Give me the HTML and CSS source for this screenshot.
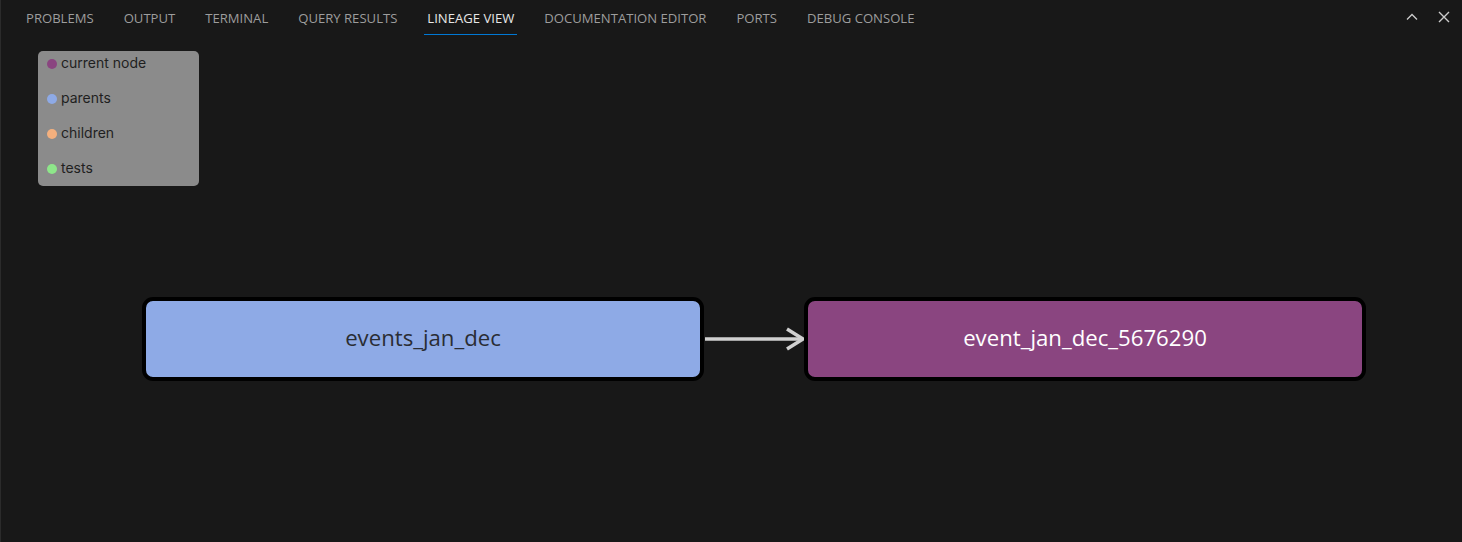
FILE: index.html
```html
<!DOCTYPE html>
<html>
<head>
<meta charset="utf-8">
<link rel="stylesheet" href="styles.css">
</head>
<body>
<div class="panel">
  <div class="tabbar">
    <div class="tabs">
      <div class="tab">PROBLEMS</div>
      <div class="tab">OUTPUT</div>
      <div class="tab">TERMINAL</div>
      <div class="tab">QUERY RESULTS</div>
      <div class="tab active">LINEAGE VIEW</div>
      <div class="tab">DOCUMENTATION EDITOR</div>
      <div class="tab">PORTS</div>
      <div class="tab">DEBUG CONSOLE</div>
    </div>
    <div class="actions">
      <svg class="icon" width="16" height="16" viewBox="0 0 16 16"><path d="M3 10.5 L8 5.5 L13 10.5" fill="none" stroke="#cccccc" stroke-width="1.3"/></svg>
      <svg class="icon" width="16" height="16" viewBox="0 0 16 16"><path d="M3 3 L13 13 M13 3 L3 13" fill="none" stroke="#cccccc" stroke-width="1.4"/></svg>
    </div>
  </div>
  <div class="canvas">
    <div class="legend">
      <div class="legend-item"><span class="dot dot-current"></span>current node</div>
      <div class="legend-item"><span class="dot dot-parent"></span>parents</div>
      <div class="legend-item"><span class="dot dot-child"></span>children</div>
      <div class="legend-item"><span class="dot dot-test"></span>tests</div>
    </div>
    <div class="node node-parent">events_jan_dec</div>
    <svg class="edge" width="102" height="30" viewBox="0 0 102 30">
      <path d="M0 15 L98 15" stroke="#d0d0d0" stroke-width="3.5" fill="none"/>
      <path d="M82 5 L98 15 L82 25" stroke="#d0d0d0" stroke-width="3.5" fill="none"/>
    </svg>
    <div class="node node-current">event_jan_dec_5676290</div>
  </div>
</div>
</body>
</html>
```
FILE: styles.css
```css
html, body {
  margin: 0;
  padding: 0;
  background: #181818;
}
.panel {
  width: 1462px;
  height: 542px;
  box-sizing: border-box;
  border-left: 1px solid #2b2b2b;
  background: #181818;
  display: flex;
  flex-direction: column;
  overflow: hidden;
}
.tabbar {
  height: 35px;
  display: flex;
  align-items: stretch;
  justify-content: space-between;
  padding-left: 22px;
  padding-right: 10px;
  flex-shrink: 0;
}
.tabs {
  display: flex;
  gap: 24px;
}
.tab {
  font-family: "Open Sans", "Noto Sans", sans-serif;
  font-size: 13.1px;
  color: #9d9d9d;
  padding: 2px 3px 0;
  display: flex;
  align-items: center;
  box-sizing: border-box;
  border-bottom: 1px solid transparent;
}
.tab.active {
  color: #e7e7e7;
  border-bottom: 1px solid #0078d4;
}
.actions {
  display: flex;
  align-items: center;
  gap: 16px;
  padding-bottom: 2px;
}
.icon { display: block; }
.canvas {
  position: relative;
  flex: 1;
}
.legend {
  position: absolute;
  left: 37px;
  top: 16px;
  width: 161px;
  height: 135px;
  box-sizing: border-box;
  background: #8b8b8b;
  border-radius: 5px;
  padding-left: 9px;
  display: flex;
  flex-direction: column;
  gap: 11px;
}
.legend-item {
  height: 24px;
  display: flex;
  align-items: center;
  font-family: Inter, "Liberation Sans", sans-serif;
  font-size: 14px;
  line-height: 16px;
  color: #1f1f1f;
}
.dot {
  width: 10px;
  height: 10px;
  border-radius: 50%;
  margin-right: 4px;
  margin-top: 1px;
}
.dot-current { background: #8a4580; }
.dot-parent { background: #8eaae6; }
.dot-child { background: #f4b07e; }
.dot-test { background: #8ee68a; }
.node {
  position: absolute;
  top: 262px;
  height: 84px;
  width: 562px;
  box-sizing: border-box;
  border: 4px solid #000;
  border-radius: 11px;
  display: flex;
  align-items: center;
  justify-content: center;
  font-family: "Open Sans", "Noto Sans", sans-serif;
  font-size: 22.2px;
  padding-bottom: 4px;
}
.node-parent {
  left: 141px;
  background: #8eaae6;
  color: #2a2d34;
}
.node-current {
  left: 803px;
  background: #8a4580;
  color: #ffffff;
}
.edge {
  position: absolute;
  left: 704px;
  top: 289px;
}
```
